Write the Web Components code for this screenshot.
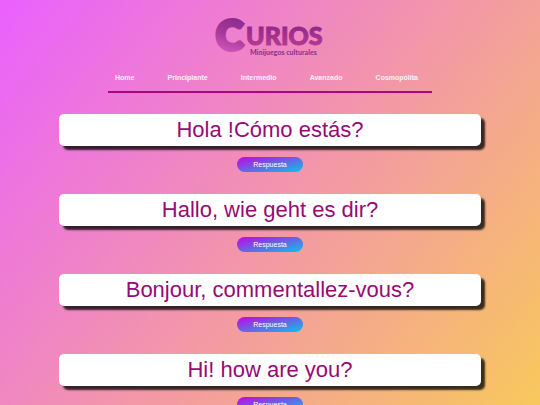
<!DOCTYPE html>
<html lang="es">
<head>
    <meta charset="UTF-8">
    <meta name="viewport" content="width=device-width, initial-scale=1.0">
    <title>Curios - Minijuegos culturales</title>
    <style>
        body {
            margin: 0;
            min-height: 100vh;
            font-family: "Liberation Sans", Arial, sans-serif;
            background: linear-gradient(129deg, #ea60ff, #f292b0 48%, #f8c85c) fixed;
        }

        main {
            display: flex;
            flex-direction: column;
            align-items: center;
            gap: 22px;
            padding: 21px 0;
        }
    </style>
</head>
<body>
    <curios-header>
        <curios-logo></curios-logo>
        <curios-nav></curios-nav>
    </curios-header>
    <main>
        <question-card respuesta="Hello! How are you?">Hola !Cómo estás?</question-card>
        <question-card respuesta="Hello, how are you?">Hallo, wie geht es dir?</question-card>
        <question-card respuesta="Hello, how are you?">Bonjour, commentallez-vous?</question-card>
        <question-card respuesta="¡Hola! ¿Cómo estás?">Hi! how are you?</question-card>
    </main>

    <script>
        class CuriosHeader extends HTMLElement {
            constructor() {
                super();
                this.attachShadow({ mode: 'open' });
            }

            connectedCallback() {
                this.shadowRoot.innerHTML = `
                    <style>
                        :host { display: block; }
                        header {
                            display: flex;
                            flex-direction: column;
                            align-items: center;
                            gap: 13px;
                        }
                    </style>
                    <header><slot></slot></header>
                `;
            }
        }

        class CuriosLogo extends HTMLElement {
            constructor() {
                super();
                this.attachShadow({ mode: 'open' });
            }

            connectedCallback() {
                this.shadowRoot.innerHTML = `
                    <style>
                        :host { display: block; }
                        svg { display: block; }
                        text { font-family: Lato, sans-serif; font-weight: 900; }
                        .inicial { font-size: 41px; fill: url(#c); stroke: url(#c); stroke-width: 4px; }
                        .nombre { font-size: 25px; fill: url(#n); stroke: url(#n); stroke-width: 1px; }
                        .lema { font-size: 7px; fill: #8a3593; }
                    </style>
                    <svg width="114" height="60" viewBox="0 0 114 60" role="img" aria-label="Curios, minijuegos culturales">
                        <defs>
                            <linearGradient id="c" gradientUnits="userSpaceOnUse" x1="24" y1="18" x2="14" y2="52">
                                <stop offset="0" stop-color="#8a2c8c"/>
                                <stop offset="0.5" stop-color="#a8379a"/>
                                <stop offset="1" stop-color="#cd56b8"/>
                            </linearGradient>
                            <linearGradient id="n" gradientUnits="userSpaceOnUse" x1="0" y1="27" x2="0" y2="46">
                                <stop offset="0" stop-color="#93298a"/>
                                <stop offset="1" stop-color="#b53a92"/>
                            </linearGradient>
                        </defs>
                        <text class="inicial" x="3" y="50">C</text>
                        <text class="nombre" x="33" y="45">URIOS</text>
                        <text class="lema" x="37" y="55">Minijuegos culturales</text>
                    </svg>
                `;
            }
        }

        class CuriosNav extends HTMLElement {
            constructor() {
                super();
                this.attachShadow({ mode: 'open' });
            }

            connectedCallback() {
                const enlaces = ['Home', 'Principiante', 'Intermedio', 'Avanzado', 'Cosmopólita'];

                this.shadowRoot.innerHTML = `
                    <style>
                        :host { display: block; width: 60%; }
                        ul {
                            display: flex;
                            justify-content: space-between;
                            margin: 0;
                            padding: 0 14px 8px 7px;
                            list-style: none;
                            border-bottom: 2px solid #a8087f;
                        }
                        li { line-height: 10px; font-size: 7px; }
                        a { color: #fff0fc; font-weight: bold; text-decoration: none; }
                    </style>
                    <nav>
                        <ul>${enlaces.map(nom => `<li><a href="#${nom.toLowerCase()}">${nom}</a></li>`).join('')}</ul>
                    </nav>
                `;
            }
        }

        class QuestionCard extends HTMLElement {
            constructor() {
                super();
                this.attachShadow({ mode: 'open' });
            }

            connectedCallback() {
                this.respuesta = this.getAttribute('respuesta');
                this.render();
            }

            render() {
                this.shadowRoot.innerHTML = `
                    <style>
                        :host {
                            display: flex;
                            flex-direction: column;
                            align-items: center;
                            gap: 11px;
                            width: 78%;
                        }
                        h2 {
                            box-sizing: border-box;
                            width: 100%;
                            margin: 0;
                            padding: 4px;
                            border-radius: 5px;
                            background: #fff;
                            box-shadow: 4px 4px 2px rgba(0, 0, 0, 0.77);
                            color: #980a74;
                            font-size: 22px;
                            font-weight: normal;
                            line-height: 24px;
                            text-align: center;
                        }
                        button {
                            padding: 0 16px;
                            border: 0;
                            border-radius: 8px;
                            background: linear-gradient(to bottom right, #c603e0, #08c4ec);
                            color: #fff;
                            font-family: inherit;
                            font-size: 7px;
                            line-height: 15px;
                            cursor: pointer;
                        }
                    </style>
                    <h2><slot></slot></h2>
                    <button type="button">Respuesta</button>
                `;

                this.shadowRoot.querySelector('button').addEventListener('click', () => this.showAnswer());
            }

            showAnswer() {
                this.textContent = this.respuesta;
            }
        }

        customElements.define('curios-header', CuriosHeader);
        customElements.define('curios-logo', CuriosLogo);
        customElements.define('curios-nav', CuriosNav);
        customElements.define('question-card', QuestionCard);
    </script>
</body>
</html>
